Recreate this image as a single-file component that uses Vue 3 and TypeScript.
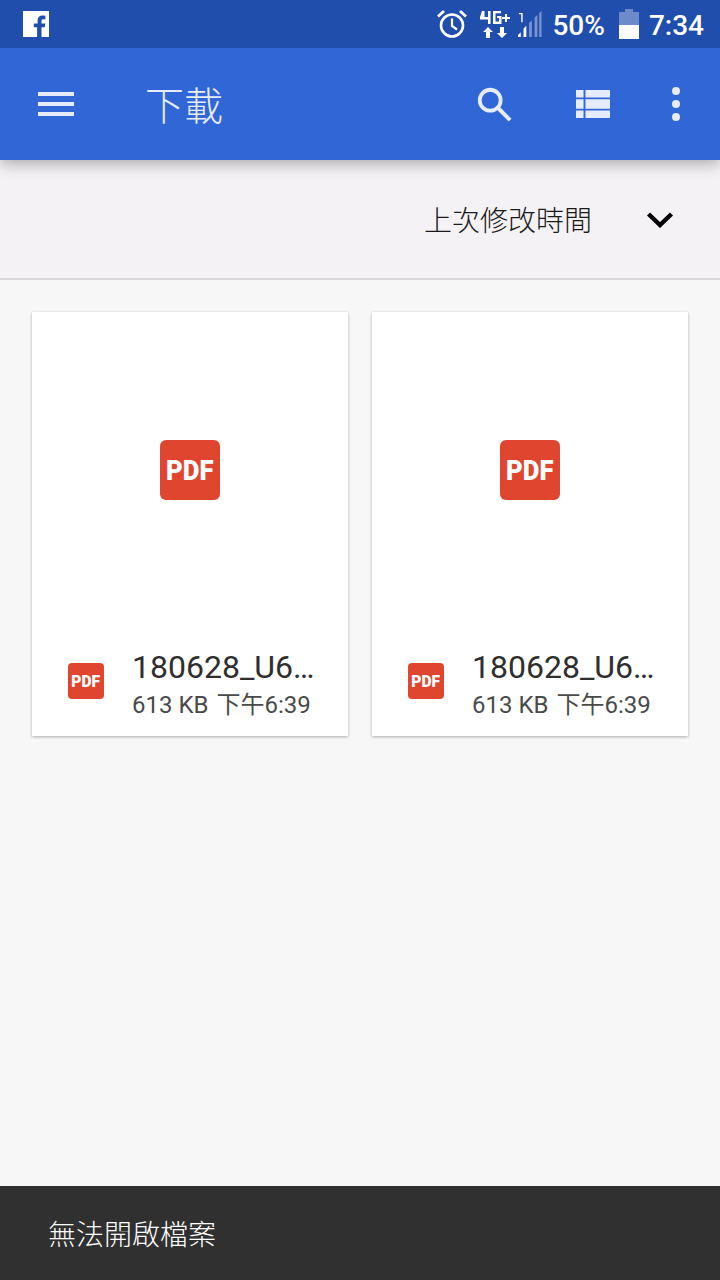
<script setup lang="ts">
const files = [
  { id: 1, name: "180628_U6…", meta: "613 KB", time: "下午6:39" },
  { id: 2, name: "180628_U6…", meta: "613 KB", time: "下午6:39" },
];
</script>

<template>
  <div class="screen">
    <div class="status">
      <svg class="fb" width="26" height="26" viewBox="0 0 26 26">
        <path fill="#fff" d="M0 0h26v26h-7.500v-9.800h3.300l.5-3.800h-3.800V10c0-1.100.3-1.800 1.900-1.800h2V4.800c-.4 0-1.600-.2-2.900-.2-2.900 0-4.900 1.800-4.900 5v2.800H10.800v3.800h3.300V26H0z" />
      </svg>
      <div class="status-right">
        <svg width="32" height="32" viewBox="0 0 32 32" fill="none" stroke="#fff">
          <circle cx="16" cy="17.500" r="11" stroke-width="2.600" />
          <path d="M16 10.500v7.500l5 3.500" stroke-width="2.200" />
          <path d="M2 8.500L8 3M30 8.500L24 3" stroke-width="2.800" />
        </svg>
        <svg class="net" width="32" height="28" viewBox="0 0 32 28" fill="#fff">
          <path d="M3 1h2.500v6H9V1h2.500v13H9V9.500H1V7z" />
          <path d="M14 1h8v2.200h-5.500v8.300H20V8h-2V6h4.500v8H14z" />
          <path d="M26 4h2v3h3v2h-3v3h-2V9h-3V7h3z" />
          <path d="M9 17l5 5h-3v6H7v-6H4z" />
          <path d="M21 17h4v6h3l-5 5-5-5h3z" />
        </svg>
        <svg class="signal" width="24" height="28" viewBox="0 0 26 28">
          <path fill="#fff" d="M1 2h4v10H3.500V3.500H1z" />
          <path fill="#fff" d="M0 28v-2l3-3v5zM6 28V19l3-3v12z" />
          <path fill="#fff" fill-opacity=".4" d="M12 28V13l3-3v18zM18 28V7l3-3v24zM23 28V2l2.500-2v28z" />
        </svg>
        <span class="pct">50%</span>
        <svg class="batt" width="20" height="30" viewBox="0 0 20 30">
          <path fill="#fff" fill-opacity=".35" d="M6 0h8v3h6v13H0V3h6z" />
          <path fill="#fff" d="M0 16h20v14H0z" />
        </svg>
        <span class="clock">7:34</span>
      </div>
    </div>

    <header class="appbar">
      <button class="icon-btn menu" aria-label="menu">
        <span></span><span></span><span></span>
      </button>
      <h1 class="title">下載</h1>
      <svg class="search" width="38" height="38" viewBox="0 0 40 40" fill="none" stroke="#e6ecfb">
        <circle cx="16" cy="16" r="11" stroke-width="4" />
        <path d="M24.500 24.500L37 37" stroke-width="4.200" />
      </svg>
      <svg class="grid" width="34" height="28" viewBox="0 0 36 30" fill="#e6ecfb" preserveAspectRatio="none">
        <path d="M0 0h8v8H0zM10 0h26v8H10zM0 10h8v10H0zM10 10h26v10H10zM0 22h8v8H0zM10 22h26v8H10z" />
      </svg>
      <div class="more"><i></i><i></i><i></i></div>
    </header>

    <div class="sortbar">
      <span>上次修改時間</span>
      <svg width="28" height="18" viewBox="0 0 28 18" fill="none" stroke="#000">
        <path d="M2.500 4l11.500 11L25.500 4" stroke-width="4.400" />
      </svg>
    </div>

    <main class="grid-list">
      <article v-for="f in files" :key="f.id" class="card">
        <div class="thumb">
          <div class="pdf big"><span>PDF</span></div>
        </div>
        <div class="info">
          <div class="pdf small"><span>PDF</span></div>
          <div class="text">
            <div class="name">{{ f.name }}</div>
            <div class="meta"><span>{{ f.meta }}</span><span>{{ f.time }}</span></div>
          </div>
        </div>
      </article>
    </main>

    <div class="snackbar">無法開啟檔案</div>
  </div>
</template>

<style>
html,
body {
  margin: 0;
  background: #f7f7f7;
}
</style>

<style scoped>
.screen {
  width: 720px;
  height: 1280px;
  display: flex;
  flex-direction: column;
  background: #f7f7f7;
  overflow: hidden;
  font-family: Roboto, "Noto Sans CJK TC", sans-serif;
}

.status {
  height: 48px;
  flex: none;
  background: #204ead;
  display: flex;
  align-items: center;
  justify-content: space-between;
  padding: 0 16px 0 23px;
  color: #fff;
  position: relative;
  z-index: 2;
}

.status-right {
  display: flex;
  align-items: center;
}

.net {
  margin-left: 11px;
}

.signal {
  margin-left: 7px;
}

.pct {
  margin-left: 10px;
  font-size: 28px;
  font-weight: 500;
  padding-top: 2px;
}

.batt {
  margin-left: 14px;
}

.clock {
  margin-left: 10px;
  font-size: 28px;
  font-weight: 500;
  padding-top: 2px;
}

.appbar {
  height: 112px;
  flex: none;
  background: #3066d6;
  display: flex;
  align-items: center;
  box-shadow: 0 4px 14px rgba(0, 0, 0, 0.3);
  position: relative;
  z-index: 1;
  padding-left: 38px;
}

.icon-btn {
  background: none;
  border: 0;
  padding: 0;
}

.menu {
  width: 36px;
  display: flex;
  flex-direction: column;
  gap: 6px;
}

.menu span {
  display: block;
  height: 4px;
  background: #e6ecfb;
}

.title {
  margin: 0 0 2px 71px;
  width: 78px;
  font-size: 39px;
  font-weight: 300;
  color: #e6ecfb;
  font-family: "Noto Sans CJK TC", sans-serif;
  white-space: nowrap;
}

.search {
  margin-left: 252px;
}

.grid {
  margin-left: 63px;
}

.more {
  margin-left: 62px;
  display: flex;
  flex-direction: column;
  gap: 5px;
}

.more i {
  display: block;
  width: 8px;
  height: 8px;
  border-radius: 50%;
  background: #e6ecfb;
}

.sortbar {
  height: 118px;
  flex: none;
  box-sizing: content-box;
  background: #f5f2f6;
  border-bottom: 2px solid #d8d8d8;
  display: flex;
  align-items: center;
  justify-content: flex-end;
  padding-right: 46px;
  gap: 54px;
  font-family: "Noto Sans CJK TC", sans-serif;
  font-weight: 300;
  font-size: 28px;
  color: #1a1a1a;
}

.grid-list {
  flex: 1;
  display: flex;
  align-items: flex-start;
  gap: 24px;
  padding: 32px 32px 0;
}

.card {
  width: 316px;
  height: 424px;
  background: #fff;
  display: flex;
  flex-direction: column;
  box-shadow: 0 1px 3px rgba(0, 0, 0, 0.3);
}

.thumb {
  height: 316px;
  display: flex;
  justify-content: center;
  padding-top: 128px;
  box-sizing: border-box;
}

.pdf {
  display: flex;
  align-items: center;
  justify-content: center;
  background: #e0452f;
  color: #fff;
  font-family: Roboto, sans-serif;
  font-weight: 900;
}

.pdf span {
  display: block;
  transform: scaleX(0.92);
}

.pdf.big {
  width: 60px;
  height: 60px;
  border-radius: 6px;
  font-size: 28px;
}

.pdf.small {
  width: 36px;
  height: 36px;
  flex: none;
  border-radius: 4px;
  font-size: 17px;
  margin-top: 15px;
}

.info {
  display: flex;
  align-items: flex-start;
  padding: 20px 0 0 36px;
}

.text {
  margin-left: 28px;
}

.name {
  font-size: 32px;
  line-height: 38px;
  color: #2e2e2e;
  white-space: nowrap;
}

.meta {
  display: flex;
  gap: 8px;
  margin-top: 3px;
  font-size: 24px;
  line-height: 32px;
  color: #4a4a4a;
  white-space: nowrap;
}

.snackbar {
  height: 94px;
  flex: none;
  background: #303030;
  color: #fff;
  display: flex;
  align-items: center;
  padding-left: 48px;
  font-family: "Noto Sans CJK TC", sans-serif;
  font-weight: 300;
  font-size: 28px;
}
</style>
